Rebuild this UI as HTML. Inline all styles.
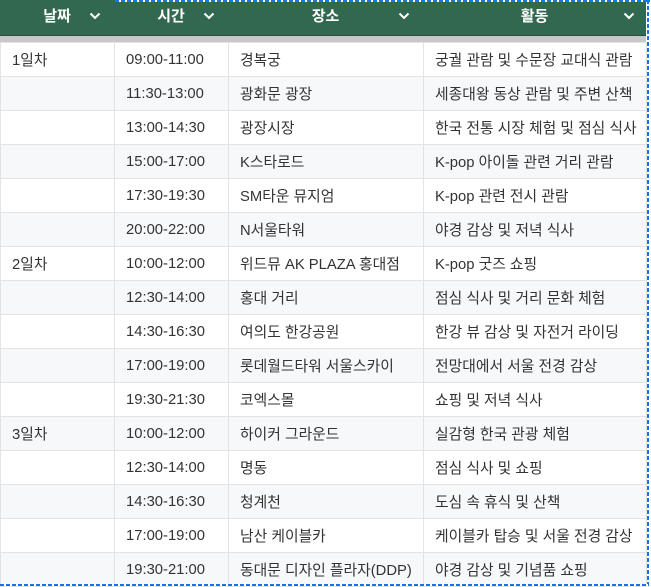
<!DOCTYPE html>
<html><head><meta charset="utf-8"><style>
*{margin:0;padding:0;box-sizing:border-box}
body{width:651px;height:587px;overflow:hidden;background:#fff;font-family:"Liberation Sans","Noto Sans CJK KR",sans-serif;position:relative}
.hdr{position:absolute;left:0;top:0;width:646px;height:36px;background:#336850;border-bottom:1px solid #264e3c}
.gap{position:absolute;left:0;top:36px;width:646px;height:6px;background:#c8c8c8}
.h{position:absolute;top:0;height:36px;line-height:34px;color:#fff;font-size:15px;font-weight:bold;text-align:center}
.chev{position:absolute;top:12px;width:12px;height:8px}
table{position:absolute;left:0;top:42px;border-collapse:collapse;width:646px;table-layout:fixed}
td{height:34px;border:1px solid #e2e3e5;font-size:14.8px;color:#333;padding-left:11px;white-space:nowrap;overflow:hidden}
tr:nth-child(even) td{background:#f7f8fa}
.d{position:absolute;pointer-events:none}
</style></head><body>
<div class="hdr"></div>
<div class="gap"></div>
<div class="h" style="left:0;width:114px">날짜</div>
<div class="h" style="left:114px;width:114px">시간</div>
<div class="h" style="left:228px;width:195px">장소</div>
<div class="h" style="left:423px;width:223px">활동</div>
<svg class="chev" style="left:89px" viewBox="0 0 12 8"><path d="M1.5 1.5L6 6 10.5 1.5" stroke="#fff" stroke-width="2" fill="none"/></svg>
<svg class="chev" style="left:203px" viewBox="0 0 12 8"><path d="M1.5 1.5L6 6 10.5 1.5" stroke="#fff" stroke-width="2" fill="none"/></svg>
<svg class="chev" style="left:398px" viewBox="0 0 12 8"><path d="M1.5 1.5L6 6 10.5 1.5" stroke="#fff" stroke-width="2" fill="none"/></svg>
<svg class="chev" style="left:623px" viewBox="0 0 12 8"><path d="M1.5 1.5L6 6 10.5 1.5" stroke="#fff" stroke-width="2" fill="none"/></svg>
<table>
<colgroup><col style="width:114px"><col style="width:114px"><col style="width:195px"><col style="width:223px"></colgroup>
<tr><td>1일차</td><td>09:00-11:00</td><td>경복궁</td><td>궁궐 관람 및 수문장 교대식 관람</td></tr>
<tr><td></td><td>11:30-13:00</td><td>광화문 광장</td><td>세종대왕 동상 관람 및 주변 산책</td></tr>
<tr><td></td><td>13:00-14:30</td><td>광장시장</td><td>한국 전통 시장 체험 및 점심 식사</td></tr>
<tr><td></td><td>15:00-17:00</td><td>K스타로드</td><td>K-pop 아이돌 관련 거리 관람</td></tr>
<tr><td></td><td>17:30-19:30</td><td>SM타운 뮤지엄</td><td>K-pop 관련 전시 관람</td></tr>
<tr><td></td><td>20:00-22:00</td><td>N서울타워</td><td>야경 감상 및 저녁 식사</td></tr>
<tr><td>2일차</td><td>10:00-12:00</td><td>위드뮤 AK PLAZA 홍대점</td><td>K-pop 굿즈 쇼핑</td></tr>
<tr><td></td><td>12:30-14:00</td><td>홍대 거리</td><td>점심 식사 및 거리 문화 체험</td></tr>
<tr><td></td><td>14:30-16:30</td><td>여의도 한강공원</td><td>한강 뷰 감상 및 자전거 라이딩</td></tr>
<tr><td></td><td>17:00-19:00</td><td>롯데월드타워 서울스카이</td><td>전망대에서 서울 전경 감상</td></tr>
<tr><td></td><td>19:30-21:30</td><td>코엑스몰</td><td>쇼핑 및 저녁 식사</td></tr>
<tr><td>3일차</td><td>10:00-12:00</td><td>하이커 그라운드</td><td>실감형 한국 관광 체험</td></tr>
<tr><td></td><td>12:30-14:00</td><td>명동</td><td>점심 식사 및 쇼핑</td></tr>
<tr><td></td><td>14:30-16:30</td><td>청계천</td><td>도심 속 휴식 및 산책</td></tr>
<tr><td></td><td>17:00-19:00</td><td>남산 케이블카</td><td>케이블카 탑승 및 서울 전경 감상</td></tr>
<tr><td></td><td>19:30-21:00</td><td>동대문 디자인 플라자(DDP)</td><td>야경 감상 및 기념품 쇼핑</td></tr>
</table>
<div class="d" style="left:115px;top:0;width:535px;height:2px;background:repeating-linear-gradient(90deg,#1a73e8 0 4px,#fff 4px 6px)"></div>
<div class="d" style="left:647px;top:0;width:2px;height:587px;background:repeating-linear-gradient(180deg,#1a73e8 0 4px,#fff 4px 6px)"></div>
<div class="d" style="left:0;top:584px;width:649px;height:2px;background:repeating-linear-gradient(90deg,#1a73e8 0 4px,#fff 4px 6px)"></div>
</body></html>
